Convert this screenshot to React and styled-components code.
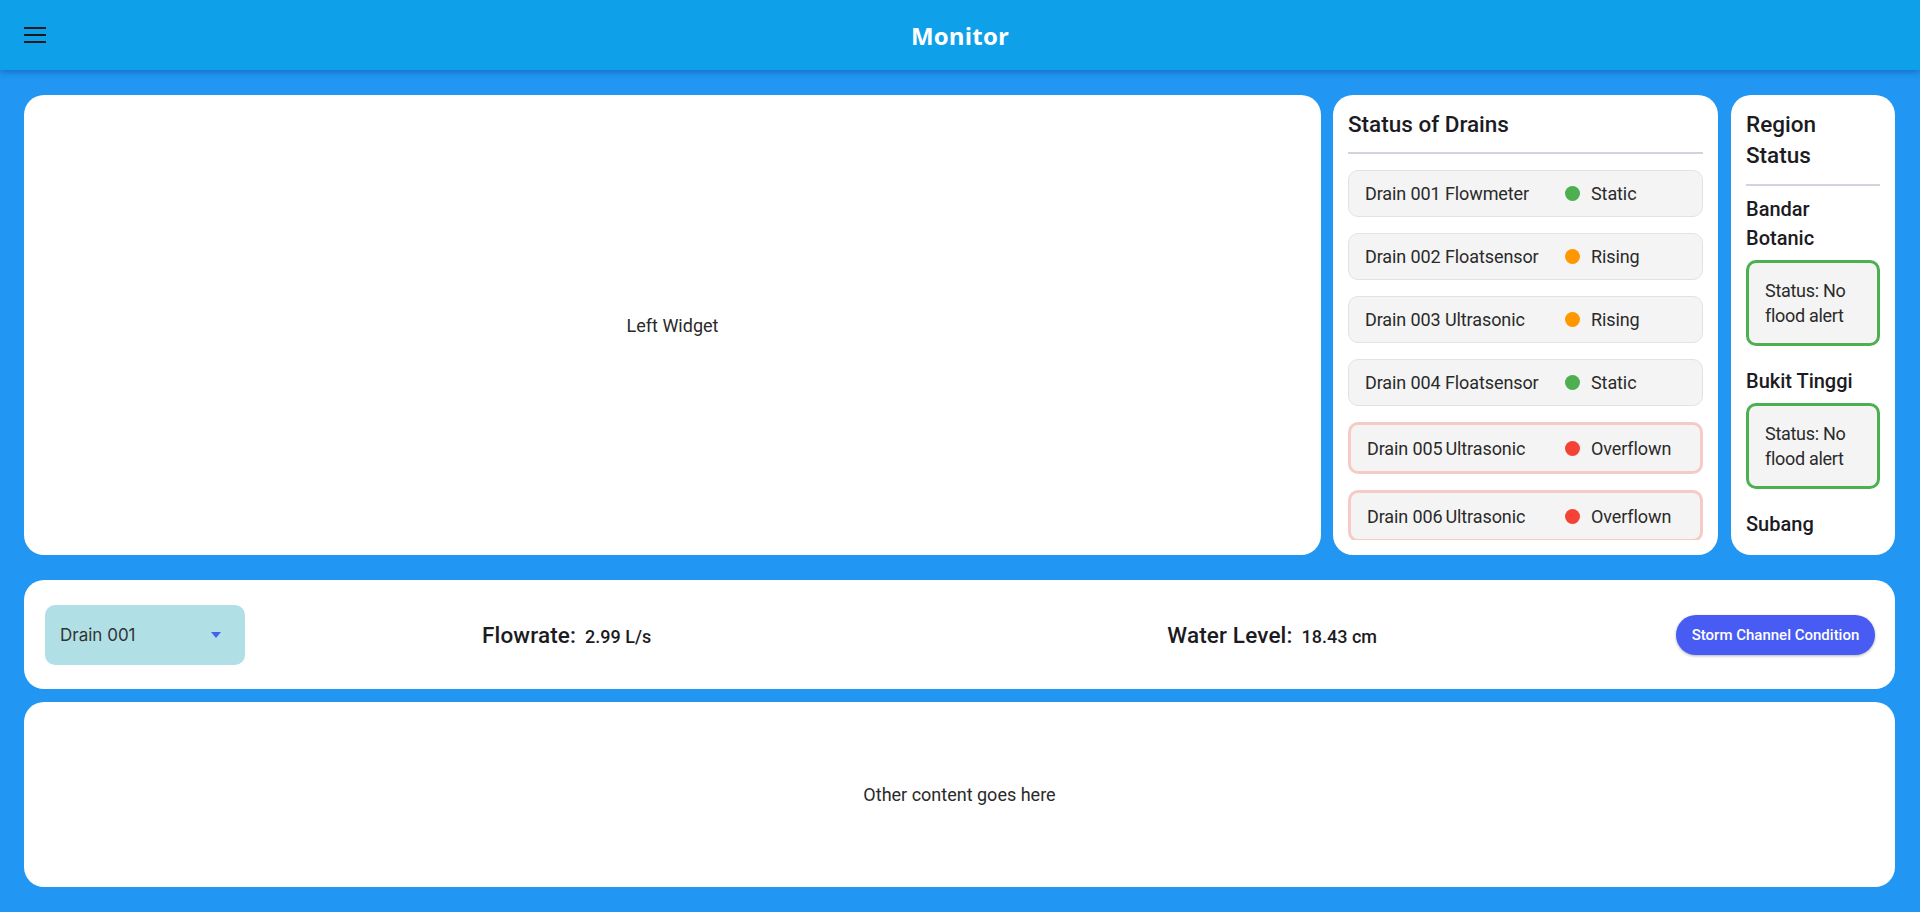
import React from "react";
import styled, { createGlobalStyle } from "styled-components";

const GlobalStyle = createGlobalStyle`
  html, body {
    margin: 0;
    padding: 0;
    background: #2196f3;
    font-family: Roboto, "Liberation Sans", sans-serif;
    overflow: hidden;
  }
  * { box-sizing: border-box; }
`;

const Page = styled.div`
  width: 1920px;
  height: 912px;
  display: flex;
  flex-direction: column;
  background: #2196f3;
`;

const Header = styled.header`
  height: 70px;
  flex-shrink: 0;
  display: flex;
  align-items: center;
  justify-content: center;
  position: relative;
  background: #0fa0ea;
  box-shadow: 0 2px 6px rgba(10, 60, 140, 0.45);
  z-index: 2;
`;

const MenuButton = styled.button`
  position: absolute;
  left: 24px;
  top: 27px;
  width: 22px;
  height: 16px;
  padding: 0;
  border: none;
  background: transparent;
  display: flex;
  flex-direction: column;
  justify-content: space-between;
  cursor: pointer;
`;

const MenuLine = styled.span`
  display: block;
  height: 2px;
  width: 100%;
  background: #1a1a1a;
`;

const Title = styled.h1`
  margin: 0;
  color: #fff;
  font-family: "Open Sans", Lato, sans-serif;
  font-weight: 700;
  font-size: 24px;
  letter-spacing: 0.2px;
`;

const Content = styled.main`
  flex: 1;
  display: flex;
  flex-direction: column;
  padding: 25px 25px 25px 24px;
`;

const TopRow = styled.div`
  display: flex;
  gap: 12px;
  height: 460px;
`;

const Card = styled.section`
  background: #fff;
  border-radius: 20px;
  overflow: hidden;
`;

const LeftCard = styled(Card)`
  flex: 1;
  display: flex;
  align-items: center;
  justify-content: center;
  color: #2a2a2a;
  font-size: 18px;
`;

const SideCard = styled(Card)`
  width: ${(p) => p.$width};
  margin-left: ${(p) => p.$shift || "0"};
  padding: 14px 15px 15px 15px;
  display: flex;
  flex-direction: column;
`;

const CardTitle = styled.h2`
  margin: 0;
  font-size: 22.5px;
  font-weight: 500;
  line-height: 31px;
  color: #1c1b1f;
`;

const Divider = styled.div`
  flex-shrink: 0;
  height: 2px;
  background: #d4d2dc;
  margin: ${(p) => p.$before} 0 ${(p) => p.$after};
`;

const ScrollArea = styled.div`
  flex: 1;
  min-height: 0;
  overflow: hidden;
  display: flex;
  flex-direction: column;
  gap: ${(p) => p.$gap || "0"};
`;

const DrainRow = styled.div`
  flex-shrink: 0;
  display: flex;
  align-items: center;
  height: ${(p) => (p.$alert ? "52px" : "47px")};
  padding-left: 16px;
  background: #f4f4f4;
  border: ${(p) => (p.$alert ? "3px solid #f5cbc6" : "1px solid #e2e2e2")};
  border-radius: 10px;
  font-size: 18px;
  letter-spacing: -0.1px;
  color: #2a2a2a;
`;

const DrainName = styled.span`
  width: ${(p) => (p.$alert ? "198px" : "200px")};
`;

const Kind = styled.span`
  margin-left: ${(p) => (p.$alert ? "-1.5px" : "0")};
`;

const Dot = styled.span`
  width: 15px;
  height: 15px;
  border-radius: 50%;
  background: ${(p) => p.$color};
  margin-right: 11px;
`;

const RegionName = styled.h3`
  margin: 0 0 7px;
  font-size: 20px;
  font-weight: 500;
  line-height: 29px;
  color: #1c1b1f;
`;

const RegionBox = styled.div`
  flex-shrink: 0;
  border: 3px solid #4caf50;
  border-radius: 10px;
  background: #f4f4f4;
  padding: 15px 10px 15px 16px;
  font-size: 18px;
  letter-spacing: -0.3px;
  line-height: 25px;
  color: #2a2a2a;
  margin-bottom: 21px;
`;

const ControlCard = styled(Card)`
  margin-top: 25px;
  height: 109px;
  display: flex;
  align-items: center;
  padding: 0 20px 0 21px;
`;

const Dropdown = styled.div`
  width: 200px;
  height: 60px;
  background: #b0e0e6;
  border-radius: 10px;
  display: flex;
  align-items: center;
  justify-content: space-between;
  padding: 0 24px 0 15px;
  font-family: Inter, Lato, sans-serif;
  font-size: 17px;
  color: #333;
`;

const Caret = styled.span`
  width: 0;
  height: 0;
  border-left: 5.5px solid transparent;
  border-right: 5.5px solid transparent;
  border-top: 6px solid #4f5cf2;
`;

const Reading = styled.div`
  display: flex;
  align-items: baseline;
  gap: 9px;
  margin-left: ${(p) => p.$offset};
`;

const ReadingLabel = styled.span`
  font-size: 22.5px;
  font-weight: 500;
  letter-spacing: 0.15px;
  color: #1c1b1f;
`;

const ReadingValue = styled.span`
  font-size: 18px;
  font-weight: 500;
  color: #1c1b1f;
`;

const ActionButton = styled.button`
  margin-left: auto;
  width: 199px;
  height: 40px;
  border: none;
  border-radius: 20px;
  background: #485cf4;
  color: #fff;
  font-family: Roboto, sans-serif;
  font-size: 15px;
  font-weight: 500;
  box-shadow: 0 1px 3px rgba(0, 0, 0, 0.3);
  cursor: pointer;
`;

const OtherCard = styled(Card)`
  margin-top: 13px;
  height: 185px;
  display: flex;
  align-items: center;
  justify-content: center;
  color: #2a2a2a;
  font-size: 18px;
`;

const drains = [
  { id: "Drain 001", kind: "Flowmeter", status: "Static" },
  { id: "Drain 002", kind: "Floatsensor", status: "Rising" },
  { id: "Drain 003", kind: "Ultrasonic", status: "Rising" },
  { id: "Drain 004", kind: "Floatsensor", status: "Static" },
  { id: "Drain 005", kind: "Ultrasonic", status: "Overflown" },
  { id: "Drain 006", kind: "Ultrasonic", status: "Overflown" },
];

const statusColors = {
  Static: "#4caf50",
  Rising: "#ff9800",
  Overflown: "#f44336",
};

const regions = ["Bandar Botanic", "Bukit Tinggi", "Subang"];

export default function App() {
  return (
    <>
      <GlobalStyle />
      <Page>
        <Header>
          <MenuButton aria-label="menu">
            <MenuLine />
            <MenuLine />
            <MenuLine />
          </MenuButton>
          <Title>Monitor</Title>
        </Header>
        <Content>
          <TopRow>
            <LeftCard>Left Widget</LeftCard>
            <SideCard $width="385px">
              <CardTitle>Status of Drains</CardTitle>
              <Divider $before="12px" $after="16px" />
              <ScrollArea $gap="16px">
                {drains.map((d) => {
                  const alert = d.status === "Overflown";
                  return (
                    <DrainRow key={d.id} $alert={alert}>
                      <DrainName $alert={alert}>
                        {d.id} <Kind $alert={alert}>{d.kind}</Kind>
                      </DrainName>
                      <Dot $color={statusColors[d.status]} />
                      {d.status}
                    </DrainRow>
                  );
                })}
              </ScrollArea>
            </SideCard>
            <SideCard $width="164px" $shift="1px">
              <CardTitle>Region Status</CardTitle>
              <Divider $before="13px" $after="9px" />
              <ScrollArea>
                {regions.map((r) => (
                  <div key={r}>
                    <RegionName>{r}</RegionName>
                    <RegionBox>Status: No flood alert</RegionBox>
                  </div>
                ))}
              </ScrollArea>
            </SideCard>
          </TopRow>
          <ControlCard>
            <Dropdown>
              Drain 001
              <Caret />
            </Dropdown>
            <Reading $offset="237px">
              <ReadingLabel>Flowrate:</ReadingLabel>
              <ReadingValue>2.99 L/s</ReadingValue>
            </Reading>
            <Reading $offset="516px">
              <ReadingLabel>Water Level:</ReadingLabel>
              <ReadingValue>18.43 cm</ReadingValue>
            </Reading>
            <ActionButton>Storm Channel Condition</ActionButton>
          </ControlCard>
          <OtherCard>Other content goes here</OtherCard>
        </Content>
      </Page>
    </>
  );
}
